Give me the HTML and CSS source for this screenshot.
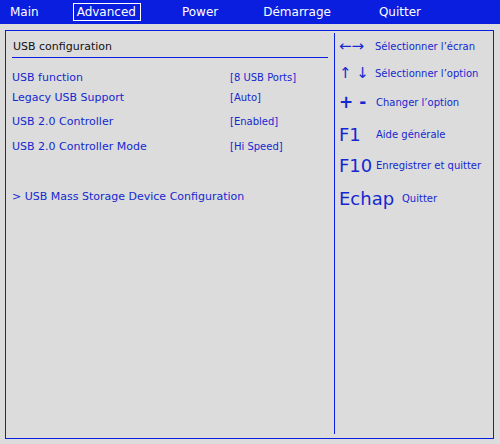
FILE: index.html
```
<!DOCTYPE html>
<html>
<head>
<meta charset="utf-8">
<link rel="stylesheet" href="styles.css">
</head>
<body>
<div class="topbar">
  <span class="tab t-main">Main</span>
  <span class="tab t-adv active">Advanced</span>
  <span class="tab t-pow">Power</span>
  <span class="tab t-dem">Démarrage</span>
  <span class="tab t-quit">Quitter</span>
</div>
<div class="frame">
  <div class="left">
    <div class="title">USB configuration</div>
    <div class="rows">
      <div class="row r1"><span class="lbl">USB function</span><span class="val">[8 USB Ports]</span></div>
      <div class="row r2"><span class="lbl">Legacy USB Support</span><span class="val">[Auto]</span></div>
      <div class="row r3"><span class="lbl">USB 2.0 Controller</span><span class="val">[Enabled]</span></div>
      <div class="row r4"><span class="lbl">USB 2.0 Controller Mode</span><span class="val">[Hi Speed]</span></div>
      <div class="row sub">&gt; USB Mass Storage Device Configuration</div>
    </div>
  </div>
  <div class="right">
    <div class="key k1"><span class="sym arrows">←→</span><span class="desc">Sélectionner l’écran</span></div>
    <div class="key k2"><span class="sym arrows">↑ ↓</span><span class="desc">Sélectionner l’option</span></div>
    <div class="key k3"><span class="sym pm">+ -</span><span class="desc">Changer l’option</span></div>
    <div class="key k4"><span class="sym fk">F1</span><span class="desc">Aide générale</span></div>
    <div class="key k5"><span class="sym fk">F10</span><span class="desc">Enregistrer et quitter</span></div>
    <div class="key k6"><span class="sym esc">Echap</span><span class="desc">Quitter</span></div>
  </div>
</div>
</body>
</html>
```
FILE: styles.css
```
html, body {
  margin: 0;
  padding: 0;
  background: #dcdcdc;
  width: 500px;
  height: 444px;
  overflow: hidden;
  font-family: "DejaVu Sans", Verdana, sans-serif;
}
.topbar {
  height: 24px;
  background: #0a1ee0;
  display: flex;
  align-items: center;
  color: #fff;
  font-size: 12px;
}
.tab {
  line-height: 16px;
  padding: 0 3px;
  border: 1px solid transparent;
}
.t-main { margin-left: 6px; }
.t-adv { margin-left: 30px; padding: 0 4px 0 3px; }
.t-pow { margin-left: 37px; }
.t-dem { margin-left: 37px; }
.t-quit { margin-left: 40px; }
.tab.active { border-color: #fff; }
.frame {
  margin: 6px 6px 0 5px;
  height: 407px;
  border: 1px solid #0a1ee0;
  display: flex;
}
.left {
  width: 316px;
  padding: 0 6px 0 6px;
  color: #1428d0;
  font-size: 11px;
}
.title {
  color: #111;
  padding: 9px 1px 4px 1px;
  border-bottom: 1px solid #0a1ee0;
}
.rows {
  padding-top: 13px;
}
.row {
  display: flex;
  height: 13px;
  line-height: 13px;
}
.lbl { width: 218px; }
.val { font-size: 10px; }
.r2 { margin-top: 7px; }
.r3 { margin-top: 11px; }
.r4 { margin-top: 12px; }
.sub { margin-top: 37px; }
.right {
  border-left: 1px solid #0a1ee0;
  margin: 2px 0 4px 0;
  flex: 1;
  color: #1428d0;
  padding-left: 4px;
}
.key {
  display: flex;
  align-items: center;
}
.desc { font-size: 10px; }
.sym { display: inline-block; }
.arrows { font-size: 15px; width: 36px; }
.pm { font-size: 17px; width: 37px; font-weight: bold; }
.fk { font-size: 18px; width: 37px; }
.esc { font-size: 18px; width: 63px; }
.k1 { margin-top: 2px; height: 22px; }
.k2 { margin-top: 5px; height: 22px; }
.k3 { margin-top: 7px; height: 22px; }
.k4 { margin-top: 10px; height: 22px; }
.k5 { margin-top: 9px; height: 22px; }
.k6 { margin-top: 10px; height: 24px; }
```
